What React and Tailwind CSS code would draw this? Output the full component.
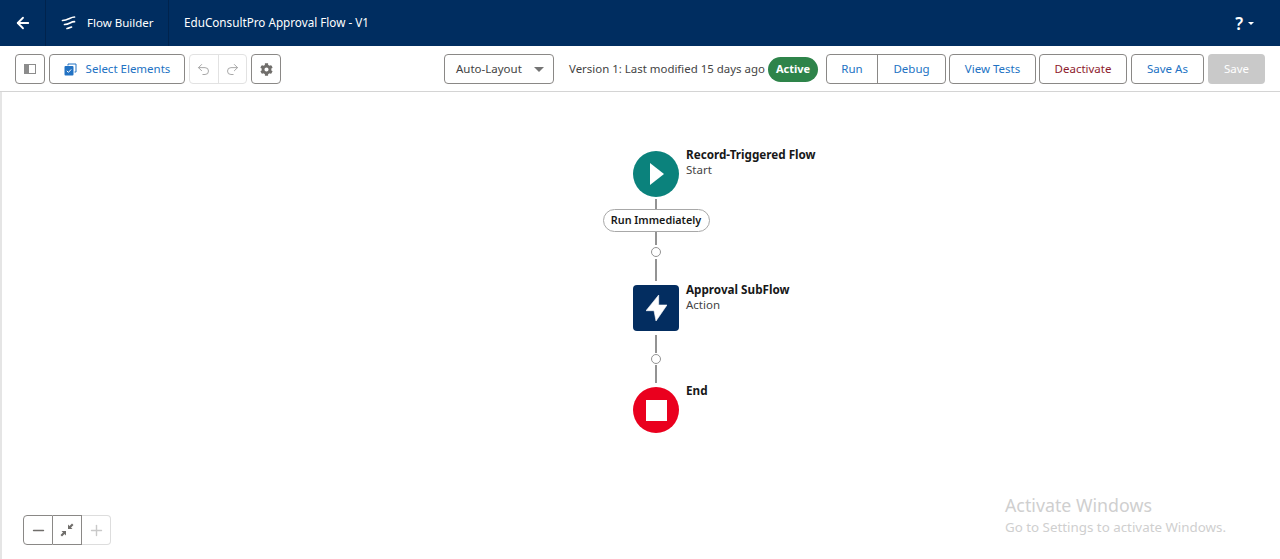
import React from 'react';
import { ArrowLeft, Undo2, Redo2, Minus, Plus } from 'lucide-react';
import { FaCog } from 'react-icons/fa';

const font = 'font-["Noto_Sans","Open_Sans",sans-serif]';

const ToolButton = ({ className = '', children }) => (
  <button className={`h-[30px] flex items-center justify-center border border-[#8a8886] rounded-[4px] bg-white text-[11.5px] text-[#2272c3] ${className}`}>
    {children}
  </button>
);

const Connector = ({ className = '' }) => <div className={`w-[2px] bg-[#939393] ${className}`} />;

const Dot = () => <div className="w-[10px] h-[10px] rounded-full border border-[#939393] bg-white" />;

const FlowNode = ({ title, subtitle, titleTop = 'top-[-4px]', children }) => (
  <div className="relative w-[46px] h-[46px]">
    {children}
    <div className={`absolute left-[53px] ${titleTop} whitespace-nowrap leading-[15px]`}>
      <div className="text-[11.7px] font-bold text-[#181818]">{title}</div>
      {subtitle && <div className="text-[11.5px] text-[#444444]">{subtitle}</div>}
    </div>
  </div>
);

export default function App() {
  return (
    <div className={`${font} w-[1280px] h-[559px] overflow-hidden bg-white flex flex-col`}>
      <header className="h-[46px] shrink-0 bg-[#002d60] flex items-center text-white">
        <div className="w-[46px] h-full flex items-center justify-center border-r border-[#00234d]">
          <ArrowLeft size={18} strokeWidth={2.4} />
        </div>
        <div className="w-[123px] h-full flex items-center pl-[15px] gap-[10px] border-r border-[#00234d] text-[11.5px]">
          <svg width="16" height="16" viewBox="0 0 16 16" fill="none" stroke="white" strokeWidth="1.7" strokeLinecap="round">
            <path d="M1.5 5.5c3.5 0 5-1 7-2s3-1.500 5-1.500" />
            <path d="M3.500 9.500c3 0 4.500-1 6-1.800s2.500-1 4-1" />
            <path d="M6 13.500c2 0 3-1 4.500-1.500" />
          </svg>
          <span>Flow Builder</span>
        </div>
        <span className="ml-[15px] text-[11.7px]">EduConsultPro Approval Flow - V1</span>
        <div className="ml-auto mr-[26px] flex items-center gap-[5px]">
          <span className="text-[17px] leading-none font-semibold">?</span>
          <span className="w-0 h-0 border-x-[3px] border-x-transparent border-t-[3px] border-t-white" />
        </div>
      </header>

      <div className="h-[46px] shrink-0 border-b border-[#d4d4d4] flex items-center pl-[15px] pt-[1px]">
        <ToolButton className="w-[30px]">
          <svg width="12" height="10" viewBox="0 0 12 10">
            <rect x="0.500" y="0.500" width="11" height="9" fill="#fff" stroke="#8c8c8c" />
            <rect x="0.500" y="0.500" width="4.500" height="9" fill="#8c8c8c" />
          </svg>
        </ToolButton>
        <ToolButton className="w-[136px] ml-[4px] gap-[9px]">
          <svg width="13" height="13" viewBox="0 0 13 13" fill="none">
            <path d="M4 2.500V1h8v8h-1.500" stroke="#2272c3" strokeWidth="1" />
            <rect x="0.500" y="3" width="9" height="9.500" rx="1" fill="#2272c3" />
            <path d="M2.800 7.800l1.600 1.600 2.800-3" stroke="white" strokeWidth="1" />
          </svg>
          <span>Select Elements</span>
        </ToolButton>
        <div className="ml-[4px] w-[58px] h-[30px] flex border border-[#e2e2e2] rounded-[4px] text-[#a8a8a8]">
          <div className="flex-1 flex items-center justify-center border-r border-[#e2e2e2]">
            <Undo2 size={15} strokeWidth={1.6} />
          </div>
          <div className="flex-1 flex items-center justify-center">
            <Redo2 size={15} strokeWidth={1.6} />
          </div>
        </div>
        <ToolButton className="w-[30px] ml-[4px]">
          <FaCog size={13} className="text-[#706e6b]" />
        </ToolButton>

        <button className="ml-[163px] w-[110px] h-[30px] flex items-center justify-between pl-[11px] pr-[9px] border border-[#8a8886] rounded-[4px] text-[11.5px] text-[#444444]">
          <span>Auto-Layout</span>
          <span className="w-0 h-0 border-x-[5px] border-x-transparent border-t-[5px] border-t-[#747474]" />
        </button>
        <span className="ml-[15px] w-[196px] text-[11.45px] text-[#444444] whitespace-nowrap">Version 1: Last modified 15 days ago</span>
        <span className="ml-[3px] w-[50px] h-[25px] flex items-center justify-center rounded-full bg-[#2e844a] text-white text-[11px] font-bold">Active</span>
        <div className="ml-[8px] flex h-[30px] border border-[#8a8886] rounded-[4px] text-[11.5px] text-[#2272c3]">
          <div className="w-[51px] flex items-center justify-center border-r border-[#8a8886]">Run</div>
          <div className="w-[67px] flex items-center justify-center">Debug</div>
        </div>
        <ToolButton className="ml-[3px] w-[87px]">View Tests</ToolButton>
        <ToolButton className="ml-[3px] w-[88px] !text-[#8e1b2d]">Deactivate</ToolButton>
        <ToolButton className="ml-[4px] w-[73px]">Save As</ToolButton>
        <button className="ml-[4px] w-[57px] h-[30px] rounded-[4px] bg-[#c9c9c9] text-white text-[11.5px]">Save</button>
      </div>

      <main className="relative flex-1 border-l-2 border-[#e5e5e5]">
        {/* diagram nodes sit on a free canvas */}
        <div className="absolute left-[631px] top-[59px] flex flex-col items-center w-[46px]">
          <FlowNode title="Record-Triggered Flow" subtitle="Start">
            <div className="w-[46px] h-[46px] rounded-full bg-[#0b827c] flex items-center justify-center">
              <svg width="14" height="22" viewBox="0 0 14 22" className="ml-[1px]">
                <polygon points="0,0 14,11 0,22" fill="white" />
              </svg>
            </div>
          </FlowNode>
          <Connector className="h-[10px] mt-[2px]" />
          <div className="w-[107px] h-[23px] shrink-0 rounded-full border border-[#a8a8a8] bg-white flex items-center justify-center text-[10.8px] font-semibold text-[#181818] whitespace-nowrap">
            Run Immediately
          </div>
          <Connector className="h-[13px]" />
          <div className="mt-[2px]"><Dot /></div>
          <Connector className="h-[22px] mt-[2px]" />
          <div className="mt-[4px]">
            <FlowNode title="Approval SubFlow" subtitle="Action" titleTop="top-[-3px]">
              <div className="w-[46px] h-[46px] rounded-[4px] bg-[#032d60] flex items-center justify-center">
                <svg width="21" height="26" viewBox="0 0 21 26">
                  <polygon points="12.700,0 0,15.700 8,15.700 10,26 21,10 12.700,10" fill="white" stroke="white" strokeWidth="0.6" strokeLinejoin="round" />
                </svg>
              </div>
            </FlowNode>
          </div>
          <Connector className="h-[18px] mt-[4px]" />
          <div className="mt-[1px]"><Dot /></div>
          <Connector className="h-[18px] mt-[1px]" />
          <div className="mt-[4px]">
            <FlowNode title="End">
              <div className="w-[46px] h-[46px] rounded-full bg-[#ea001e] flex items-center justify-center">
                <div className="w-[21px] h-[21px] bg-white" />
              </div>
            </FlowNode>
          </div>
        </div>

        <div className="absolute left-[21px] bottom-[14px] flex h-[30px]">
          <div className="w-[30px] flex items-center justify-center border border-[#8a8886] rounded-l-[4px] text-[#706e6b]">
            <Minus size={17} />
          </div>
          <div className="w-[29px] flex items-center justify-center border-y border-r border-[#8a8886] text-[#706e6b]">
            <svg width="14" height="14" viewBox="0 0 14 14" fill="#706e6b">
              <path d="M8 6V1.500L9.500 3 12 0.500 13.500 2 11 4.500 12.500 6z" />
              <path d="M6 8v4.500L4.500 11 2 13.500 0.500 12 3 9.500 1.500 8z" />
            </svg>
          </div>
          <div className="w-[29px] flex items-center justify-center border-y border-r border-[#dddddd] rounded-r-[4px] text-[#c9c9c9]">
            <Plus size={17} />
          </div>
        </div>

        <div className="absolute left-[1003px] top-[401px] text-[#cfcfcf] whitespace-nowrap">
          <div className="text-[17.8px] leading-[24px]">Activate Windows</div>
          <div className="text-[13.35px] leading-[18px] mt-[1px]">Go to Settings to activate Windows.</div>
        </div>
      </main>
    </div>
  );
}
